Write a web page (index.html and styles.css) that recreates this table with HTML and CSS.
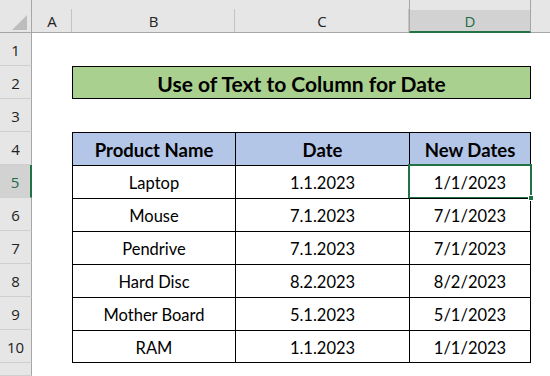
FILE: index.html
```html
<!DOCTYPE html>
<html>
<head>
<meta charset="utf-8">
<link rel="stylesheet" href="styles.css">
</head>
<body>
<div class="sheet">
  <div class="corner"><span class="tri"></span></div>
  <div class="colh">A</div>
  <div class="colh">B</div>
  <div class="colh">C</div>
  <div class="colh sel">D</div>
  <div class="colh rest"></div>

  <div class="rowh">1</div>
  <div class="blank span5"></div>

  <div class="rowh">2</div>
  <div class="blank"></div>
  <div class="title">Use of Text to Column for Date</div>
  <div class="blank"></div>

  <div class="rowh">3</div>
  <div class="blank span5"></div>

  <div class="rowh">4</div>
  <div class="blank"></div>
  <div class="cell head first">Product Name</div>
  <div class="cell head">Date</div>
  <div class="cell head last">New Dates</div>
  <div class="blank"></div>

  <div class="rowh sel">5</div>
  <div class="blank"></div>
  <div class="cell first">Laptop</div>
  <div class="cell">1.1.2023</div>
  <div class="cell last active">1/1/2023<span class="handle"></span></div>
  <div class="blank"></div>

  <div class="rowh">6</div>
  <div class="blank"></div>
  <div class="cell first">Mouse</div>
  <div class="cell">7.1.2023</div>
  <div class="cell last">7/1/2023</div>
  <div class="blank"></div>

  <div class="rowh">7</div>
  <div class="blank"></div>
  <div class="cell first">Pendrive</div>
  <div class="cell">7.1.2023</div>
  <div class="cell last">7/1/2023</div>
  <div class="blank"></div>

  <div class="rowh">8</div>
  <div class="blank"></div>
  <div class="cell first">Hard Disc</div>
  <div class="cell">8.2.2023</div>
  <div class="cell last">8/2/2023</div>
  <div class="blank"></div>

  <div class="rowh">9</div>
  <div class="blank"></div>
  <div class="cell first">Mother Board</div>
  <div class="cell">5.1.2023</div>
  <div class="cell last">5/1/2023</div>
  <div class="blank"></div>

  <div class="rowh">10</div>
  <div class="blank"></div>
  <div class="cell first bottom">RAM</div>
  <div class="cell bottom">1.1.2023</div>
  <div class="cell last bottom">1/1/2023</div>
  <div class="blank"></div>

  <div class="rowh"></div>
  <div class="blank span5"></div>
</div>
</body>
</html>
```
FILE: styles.css
```css
* { box-sizing: border-box; }
html, body { margin: 0; padding: 0; background: #fff; }
body { width: 550px; height: 376px; overflow: hidden; }

.sheet {
  display: grid;
  grid-template-columns: 32px 40px 163px 174px 122px 19px;
  grid-template-rows: repeat(11, 33px) 13px;
  font-family: Lato, "Liberation Sans", sans-serif;
  color: #000;
}

.corner {
  background: #e6e6e6;
  border-bottom: 1px solid #a6a6a6;
  border-right: 1px solid #a6a6a6;
  position: relative;
}
.tri {
  position: absolute;
  left: 12px;
  top: 15px;
  width: 0;
  height: 0;
  border-style: solid;
  border-width: 0 0 15px 15px;
  border-color: transparent transparent #bdbdbd transparent;
}

.colh {
  background: #e6e6e6;
  border-bottom: 1px solid #a6a6a6;
  display: flex;
  align-items: center;
  justify-content: center;
  padding-top: 10px;
  font-family: "Open Sans", "Noto Sans", sans-serif;
  font-size: 15px;
  color: #222;
  background-image: linear-gradient(#c4c4c4, #c4c4c4);
  background-size: 1px 23px;
  background-position: right bottom;
  background-repeat: no-repeat;
}
.colh.sel {
  background: linear-gradient(#e6e6e6, #e6e6e6) top / 100% 10px no-repeat, #d2d2d2;
  border-left: 1px solid #a6a6a6;
  border-right: 1px solid #a6a6a6;
  border-bottom: 2px solid #217346;
  color: #1e6b48;
}
.colh.rest { background-image: none; }

.rowh {
  background: #e6e6e6;
  border-right: 1px solid #a6a6a6;
  border-bottom: 1px solid #cfcfcf;
  display: flex;
  align-items: center;
  justify-content: center;
  font-family: "Open Sans", "Noto Sans", sans-serif;
  font-size: 15px;
  color: #222;
  padding-top: 2px;
}
.rowh.sel {
  background: #d2d2d2;
  border-right: 2px solid #217346;
  color: #1e6b48;
}

.blank { background: #fff; }
.span5 { grid-column: span 5; }

.title {
  grid-column: span 3;
  background: #a9d08e;
  border: 1px solid #000;
  display: flex;
  align-items: center;
  justify-content: center;
  font-weight: 700;
  font-size: 21px;
  padding-top: 2px;
}

.cell {
  border-top: 1px solid #000;
  border-left: 1px solid #000;
  display: flex;
  align-items: center;
  justify-content: center;
  font-size: 16.5px;
  padding-top: 2px;
  position: relative;
}
.cell.last { border-right: 1px solid #000; }
.cell.bottom { border-bottom: 1px solid #000; }
.cell.head {
  background: #b4c6e7;
  font-weight: 700;
  font-size: 18.5px;
}

.cell.active::after {
  content: "";
  position: absolute;
  left: -2px;
  top: -2px;
  right: -2px;
  bottom: -1px;
  border: 2px solid #217346;
}
.handle {
  position: absolute;
  right: -4px;
  bottom: -3px;
  width: 6px;
  height: 6px;
  background: #217346;
  border: 1px solid #fff;
  z-index: 2;
}
```
